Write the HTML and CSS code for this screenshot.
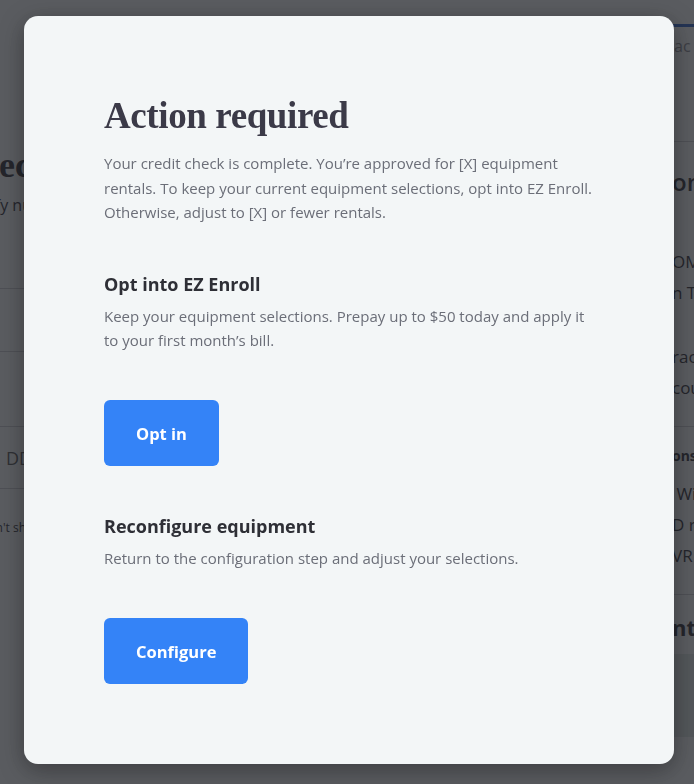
FILE: index.html
```html
<!DOCTYPE html>
<html lang="en">
<head>
  <meta charset="UTF-8" />
  <meta name="viewport" content="width=device-width, initial-scale=1.0"/>
  <title>Action required</title>
  <link rel="stylesheet" href="styles.css">
</head>
<body>
  <!-- page behind the dialog -->
  <div class="page">
    <div class="main">
      <h2 class="main-title">Review your selec</h2>
      <p class="main-sub">Check your order details and verify nu</p>
      <div class="main-row"></div>
      <div class="main-row main-row-tall"></div>
      <div class="main-row main-row-text"><span>HD DVR receiver rental&nbsp;&nbsp;&nbsp;&nbsp;&nbsp;&nbsp;DD</span></div>
      <p class="main-note">Prices and fees won't sh</p>
    </div>
    <aside class="side">
      <div class="side-top">ac</div>
      <h3 class="side-title">on</h3>
      <p class="side-line side-first">OM</p>
      <p class="side-line">n T</p>
      <p class="side-line side-gap">rac</p>
      <p class="side-line">cou</p>
      <p class="side-head">ons</p>
      <p class="side-item side-item-first">&nbsp;Wi</p>
      <p class="side-item">D re</p>
      <p class="side-item">VR</p>
      <p class="side-head side-big">nt</p>
      <div class="side-band"></div>
    </aside>
  </div>

  <div class="overlay">
    <div class="modal">
      <h1 class="modal-title">Action required</h1>
      <p class="modal-text">Your credit check is complete. You’re approved for [X] equipment<br>rentals. To keep your current equipment selections, opt into EZ Enroll.<br>Otherwise, adjust to [X] or fewer rentals.</p>

      <div class="option">
        <h2 class="option-title">Opt into EZ Enroll</h2>
        <p class="modal-text">Keep your equipment selections. Prepay up to $50 today and apply it<br>to your first month’s bill.</p>
        <button class="btn">Opt in</button>
      </div>

      <div class="option">
        <h2 class="option-title">Reconfigure equipment</h2>
        <p class="modal-text">Return to the configuration step and adjust your selections.</p>
        <button class="btn">Configure</button>
      </div>
    </div>
  </div>
</body>
</html>
```

FILE: styles.css
```css
* {
  box-sizing: border-box;
}

body {
  margin: 0;
  background: #f3f6f7;
  font-family: "Open Sans", "Lato", sans-serif;
  color: #2e2f36;
  overflow: hidden;
}

/* background page */
.page {
  display: flex;
  height: 784px;
  overflow: hidden;
  white-space: nowrap;
}

.main {
  flex: none;
  width: 972px;
  margin-left: -300px;
  padding-top: 141px;
}

.main-title {
  margin: 0 0 6px;
  font-family: "Liberation Serif", serif;
  font-size: 36px;
  line-height: 48px;
  text-align: right;
  padding-right: 641px;
}

.main-sub {
  margin: 0 0 73px;
  font-size: 16px;
  line-height: 20px;
  text-align: right;
  padding-right: 640px;
}

.main-row {
  height: 63px;
  border-top: 1px solid #c7c9ce;
}

.main-row-tall {
  height: 75px;
}

.main-row-text {
  display: flex;
  align-items: center;
  justify-content: flex-end;
  padding-right: 640px;
  border-bottom: 1px solid #c7c9ce;
  font-size: 18px;
  color: #555;
}

.main-note {
  margin: 31px 0 0;
  font-size: 12px;
  line-height: 16px;
  text-align: right;
  padding-right: 646px;
}

.side {
  flex: none;
  width: 200px;
  display: flex;
  flex-direction: column;
  padding-top: 24px;
}

.side-top {
  height: 118px;
  padding: 8px 0 0 2px;
  border-top: 3px solid #2d63c8;
  border-bottom: 1px solid #c7c9ce;
  color: #8a8c93;
  font-size: 16px;
}

.side-title {
  margin: 22px 0 0;
  height: 88px;
  font-size: 24px;
  line-height: 36px;
  font-weight: 600;
}

.side-line {
  margin: 12px 0 0;
  font-size: 17px;
  line-height: 19px;
}

.side-first {
  margin-top: 0;
}

.side-gap {
  margin-top: 45px;
}

.side-head {
  margin: 29px 0 0;
  padding-top: 20px;
  border-top: 1px solid #c7c9ce;
  font-size: 14px;
  line-height: 18px;
  font-weight: 700;
}

.side-item {
  margin: 0;
  font-size: 17px;
  line-height: 31px;
}

.side-item-first {
  margin-top: 13px;
}

.side-big {
  margin-top: 23px;
  padding-top: 18px;
  font-size: 22px;
  line-height: 28px;
}

.side-band {
  margin-top: 13px;
  height: 83px;
  background: #d8e2df;
}

/* dim layer and dialog */
.overlay {
  position: fixed;
  inset: 0;
  background: rgba(33, 34, 40, 0.73);
  display: flex;
  justify-content: center;
  padding-top: 16px;
}

.modal {
  width: 650px;
  height: 748px;
  background: #f3f6f7;
  border-radius: 14px;
  padding: 78px 56px 0 80px;
  box-shadow: 0 6px 24px rgba(0, 0, 0, 0.35);
  transform: translateX(2px);
}

.modal-title {
  margin: 0 0 13px;
  font-family: "Liberation Serif", serif;
  font-size: 37px;
  line-height: 44px;
  letter-spacing: -0.4px;
  font-weight: 700;
  color: #3b3a48;
}

.modal-text {
  margin: 0;
  font-size: 15px;
  line-height: 24.5px;
  color: #6b6e78;
}

.option {
  margin-top: 47px;
}

.option + .option {
  margin-top: 48px;
}

.option-title {
  margin: 0 0 8px;
  font-size: 18px;
  line-height: 24px;
  font-weight: 700;
  color: #2e2f36;
}

.btn {
  display: block;
  margin-top: 47.5px;
  height: 66px;
  padding: 0 32px;
  border: none;
  border-radius: 6px;
  background: #3483f7;
  color: #fff;
  font-family: inherit;
  font-size: 16.5px;
  font-weight: 700;
  cursor: pointer;
}
```
